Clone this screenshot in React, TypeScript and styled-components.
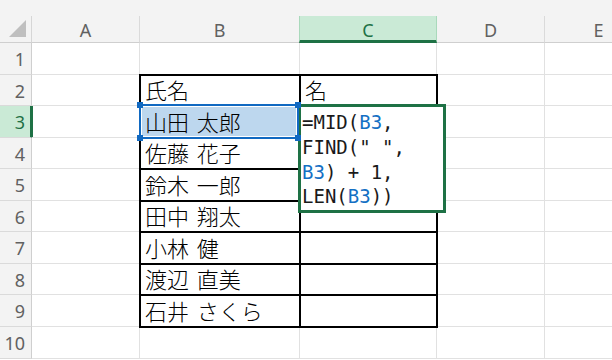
import React from "react";
import styled, { createGlobalStyle, css } from "styled-components";

const GlobalStyle = createGlobalStyle`
  html, body { margin: 0; padding: 0; background: #ffffff; }
  body { overflow: hidden; }
  #root { width: 612px; height: 360px; overflow: hidden; }
`;

const GREEN = "#1e7145";
const GREEN_BG = "#caead6";
const BLUE = "#1169c1";

const Page = styled.div`
  width: 612px;
  height: 360px;
  overflow: hidden;
  display: flex;
  flex-direction: column;
  background: #ffffff;
`;

const TopBand = styled.div`
  height: 16px;
  flex: none;
  background: #f3f3f3;
`;

const Sheet = styled.div`
  display: grid;
  grid-template-columns: 32px 108px 160px 137px 108px 108px;
  grid-template-rows: 27px 32px 31px 32px 31px 32px 31px 32px 31px 32px 32px;
  flex: none;
`;

const HeaderBase = css`
  box-sizing: border-box;
  background: #f3f3f3;
  font-family: "Noto Sans", "Liberation Sans", sans-serif;
  font-size: 18px;
  line-height: 1;
  color: #616161;
  display: flex;
`;

const Corner = styled.div`
  ${HeaderBase};
  border-right: 1px solid #d6d6d6;
  border-bottom: 1px solid #cfcfcf;
  align-items: flex-end;
  justify-content: flex-end;
  padding: 0 5px 5px 0;
`;

const CornerTriangle = styled.div`
  width: 0;
  height: 0;
  border-left: 17px solid transparent;
  border-bottom: 17px solid #bfbfbf;
`;

const ColHeader = styled.div<{ $active?: boolean }>`
  ${HeaderBase};
  align-items: center;
  justify-content: center;
  padding-top: 1px;
  border-right: 1px solid #dadada;
  border-bottom: 1px solid #cfcfcf;
  ${(p) =>
    p.$active &&
    css`
      background: ${GREEN_BG};
      color: ${GREEN};
      border-left: 1px solid #a9d9bb;
      border-right: 1px solid #a9d9bb;
      border-bottom: 3px solid ${GREEN};
      margin-left: -1px;
      padding-top: 3px;
    `}
`;

const RowHeader = styled.div<{ $active?: boolean }>`
  ${HeaderBase};
  align-items: center;
  justify-content: flex-end;
  padding: 1px 6px 0 0;
  border-right: 1px solid #cfcfcf;
  border-bottom: 1px solid #dadada;
  ${(p) =>
    p.$active &&
    css`
      background: ${GREEN_BG};
      color: ${GREEN};
      border-right: 3px solid ${GREEN};
      margin-right: -1px;
      padding-right: 5px;
    `}
`;

const Cell = styled.div<{ $boxed?: boolean; $fill?: string }>`
  position: relative;
  box-sizing: border-box;
  border-right: 1px solid #e1e1e1;
  border-bottom: 1px solid #e1e1e1;
  background: ${(p) => p.$fill ?? "transparent"};
  display: flex;
  align-items: center;
  padding: 0 0 2px 5px;
  font-family: "Noto Sans CJK JP", "Noto Sans", sans-serif;
  font-size: 22px;
  font-weight: 300;
  word-spacing: 3px;
  color: #000000;
  white-space: pre;
  ${(p) =>
    p.$boxed &&
    css`
      &::after {
        content: "";
        position: absolute;
        top: -1px;
        left: -1px;
        right: -2px;
        bottom: -2px;
        border: 2px solid #000000;
        pointer-events: none;
        z-index: 1;
      }
    `}
`;

const RefFrame = styled.div`
  position: absolute;
  left: -1px;
  top: -2px;
  width: 160px;
  height: 35px;
  box-sizing: border-box;
  border: 2px solid ${BLUE};
  box-shadow: inset 0 0 0 1px #ffffff;
  z-index: 4;
  pointer-events: none;
`;

const Handle = styled.span<{ $v: "top" | "bottom"; $h: "left" | "right" }>`
  position: absolute;
  width: 6px;
  height: 6px;
  background: ${BLUE};
  ${(p) => (p.$v === "top" ? "top: -4px;" : "bottom: -4px;")}
  ${(p) => (p.$h === "left" ? "left: -4px;" : "right: -4px;")}
`;

const Editor = styled.div`
  position: absolute;
  left: -2px;
  top: -2px;
  width: 148px;
  height: 109px;
  box-sizing: border-box;
  border: 3px solid ${GREEN};
  background: #ffffff;
  z-index: 3;
  padding: 3px 0 0 1px;
  font-family: "DejaVu Sans Mono", "Liberation Mono", monospace;
  font-size: 19px;
  font-weight: 400;
  word-spacing: 0;
  line-height: 24.8px;
  color: #1a1a1a;
`;

const FormulaLine = styled.div`
  white-space: pre;
`;

const Ref = styled.span`
  color: #1470c4;
`;

const columns = ["A", "B", "C", "D", "E"];

const names: Record<number, string> = {
  2: "氏名",
  3: "山田 太郎",
  4: "佐藤 花子",
  5: "鈴木 一郎",
  6: "田中 翔太",
  7: "小林 健",
  8: "渡辺 直美",
  9: "石井 さくら",
};

const rows = [1, 2, 3, 4, 5, 6, 7, 8, 9, 10];

export default function App() {
  return (
    <>
      <GlobalStyle />
      <Page>
        <TopBand />
        <Sheet>
          <Corner>
            <CornerTriangle />
          </Corner>
          {columns.map((c) => (
            <ColHeader key={c} $active={c === "C"}>
              {c}
            </ColHeader>
          ))}
          {rows.map((r) => {
            const boxed = r >= 2 && r <= 9;
            return (
              <React.Fragment key={r}>
                <RowHeader $active={r === 3}>{r}</RowHeader>
                <Cell />
                <Cell $boxed={boxed} $fill={r === 3 ? "#bdd7ee" : undefined}>
                  {names[r] ?? ""}
                  {r === 3 && (
                    <RefFrame>
                      <Handle $v="top" $h="left" />
                      <Handle $v="top" $h="right" />
                      <Handle $v="bottom" $h="left" />
                      <Handle $v="bottom" $h="right" />
                    </RefFrame>
                  )}
                </Cell>
                <Cell $boxed={boxed}>
                  {r === 2 ? "名" : ""}
                  {r === 3 && (
                    <Editor>
                      <FormulaLine>
                        =MID(<Ref>B3</Ref>,
                      </FormulaLine>
                      <FormulaLine>FIND(" ",</FormulaLine>
                      <FormulaLine>
                        <Ref>B3</Ref>) + 1,
                      </FormulaLine>
                      <FormulaLine>
                        LEN(<Ref>B3</Ref>))
                      </FormulaLine>
                    </Editor>
                  )}
                </Cell>
                <Cell />
                <Cell />
              </React.Fragment>
            );
          })}
        </Sheet>
      </Page>
    </>
  );
}
